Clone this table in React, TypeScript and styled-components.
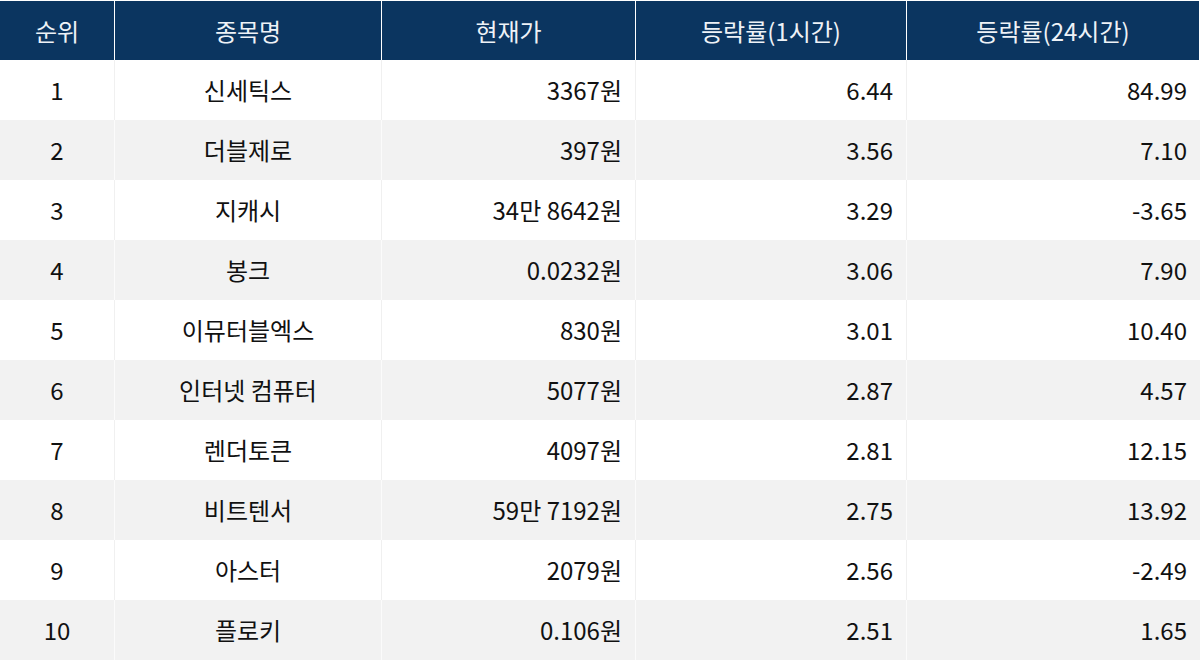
import styled, { createGlobalStyle } from "styled-components";

const GlobalStyle = createGlobalStyle`
  html, body {
    margin: 0;
    padding: 0;
    background: #ffffff;
  }
  body {
    font-family: "Noto Sans CJK KR", "Noto Sans", sans-serif;
  }
`;

type Row = {
  rank: number;
  name: string;
  price: string;
  hour: string;
  day: string;
};

const rows: Row[] = [
  { rank: 1, name: "신세틱스", price: "3367원", hour: "6.44", day: "84.99" },
  { rank: 2, name: "더블제로", price: "397원", hour: "3.56", day: "7.10" },
  { rank: 3, name: "지캐시", price: "34만 8642원", hour: "3.29", day: "-3.65" },
  { rank: 4, name: "봉크", price: "0.0232원", hour: "3.06", day: "7.90" },
  { rank: 5, name: "이뮤터블엑스", price: "830원", hour: "3.01", day: "10.40" },
  { rank: 6, name: "인터넷 컴퓨터", price: "5077원", hour: "2.87", day: "4.57" },
  { rank: 7, name: "렌더토큰", price: "4097원", hour: "2.81", day: "12.15" },
  { rank: 8, name: "비트텐서", price: "59만 7192원", hour: "2.75", day: "13.92" },
  { rank: 9, name: "아스터", price: "2079원", hour: "2.56", day: "-2.49" },
  { rank: 10, name: "플로키", price: "0.106원", hour: "2.51", day: "1.65" },
];

const Table = styled.div`
  display: grid;
  grid-template-columns: 115px 267px 254px 271px 1fr;
  width: 1200px;
  padding-top: 1px;
`;

const HeadCell = styled.div`
  height: 59px;
  display: flex;
  align-items: center;
  justify-content: center;
  background: #0b3560;
  color: #eef2f7;
  font-size: 24px;
  border-right: 1px solid #ffffff;
  box-sizing: border-box;
  &:last-child {
    border-right: none;
  }
`;

const Cell = styled.div<{ $striped: boolean; $align: "center" | "right" }>`
  height: 60px;
  display: flex;
  align-items: center;
  justify-content: ${(p) => (p.$align === "right" ? "flex-end" : "center")};
  padding: 0 13px 1px 0;
  padding-left: ${(p) => (p.$align === "right" ? "0" : "13px")};
  box-sizing: border-box;
  background: ${(p) => (p.$striped ? "#f2f2f2" : "#ffffff")};
  color: #111111;
  font-size: 24px;
  border-right: 1px solid ${(p) => (p.$striped ? "#fbfbfb" : "#f0f0f0")};
`;

const LastCell = styled(Cell)`
  border-right: none;
`;

export default function App() {
  return (
    <>
      <GlobalStyle />
      <Table>
        <HeadCell>순위</HeadCell>
        <HeadCell>종목명</HeadCell>
        <HeadCell>현재가</HeadCell>
        <HeadCell>등락률(1시간)</HeadCell>
        <HeadCell>등락률(24시간)</HeadCell>
        {rows.map((r, i) => {
          const striped = i % 2 === 1;
          return [
            <Cell key={`r${i}`} $striped={striped} $align="center">
              {r.rank}
            </Cell>,
            <Cell key={`n${i}`} $striped={striped} $align="center">
              {r.name}
            </Cell>,
            <Cell key={`p${i}`} $striped={striped} $align="right">
              {r.price}
            </Cell>,
            <Cell key={`h${i}`} $striped={striped} $align="right">
              {r.hour}
            </Cell>,
            <LastCell key={`d${i}`} $striped={striped} $align="right">
              {r.day}
            </LastCell>,
          ];
        })}
      </Table>
    </>
  );
}
